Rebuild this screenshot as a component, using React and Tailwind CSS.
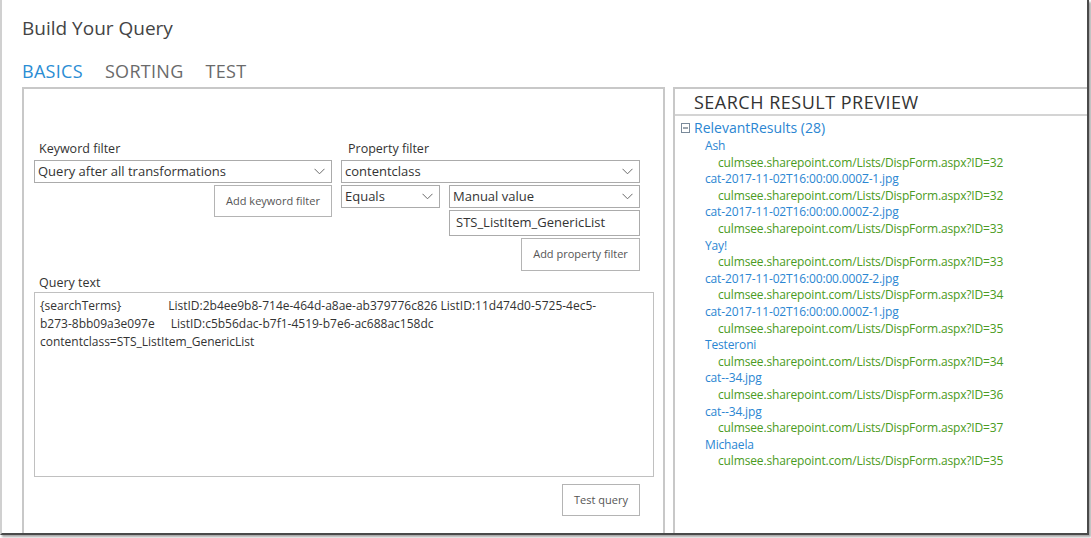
const font = { fontFamily: '"Segoe UI", "Open Sans", "Noto Sans", sans-serif' };

const results = [
  ['Ash', '32'],
  ['cat-2017-11-02T16:00:00.000Z-1.jpg', '32'],
  ['cat-2017-11-02T16:00:00.000Z-2.jpg', '33'],
  ['Yay!', '33'],
  ['cat-2017-11-02T16:00:00.000Z-2.jpg', '34'],
  ['cat-2017-11-02T16:00:00.000Z-1.jpg', '35'],
  ['Testeroni', '34'],
  ['cat--34.jpg', '36'],
  ['cat--34.jpg', '37'],
  ['Michaela', '35'],
];

function Chevron() {
  return (
    <svg width="11" height="7" viewBox="0 0 11 7" className="shrink-0">
      <path d="M0.5 0.8 L5.5 5.8 L10.5 0.8" fill="none" stroke="#6a6a6a" strokeWidth="1" />
    </svg>
  );
}

function Select({ value, className = '' }) {
  return (
    <div className={`h-[23px] border border-[#ababab] bg-white flex items-center justify-between pl-[3px] pr-[6px] text-[13px] text-[#333] ${className}`}>
      <span>{value}</span>
      <Chevron />
    </div>
  );
}

function Button({ children, className = '' }) {
  return (
    <div className={`h-[32px] border border-[#b4b4b4] bg-white flex items-center justify-center text-[11px] text-[#555] ${className}`}>
      {children}
    </div>
  );
}

export default function App() {
  return (
    <div className="w-[1091px] h-[538px] bg-white overflow-hidden" style={font}>
      <div className="w-[1089px] h-[535px] border-l-2 border-l-[#d0d0d0] border-r-2 border-r-[#4a4a4a] border-b-2 border-b-[#4a4a4a] shadow-[2px_2px_2px_rgba(0,0,0,0.35)] flex flex-col pl-[20px]">
        {/* Title */}
        <div className="pt-[15px] text-[19px] leading-[26px] text-[#444]">Build Your Query</div>

        {/* Tabs */}
        <div className="mt-[18px] flex gap-[22px] text-[18px] leading-[24px] tracking-[0.3px]">
          <span className="text-[#2a8dd4]">BASICS</span>
          <span className="text-[#6a6a6a]">SORTING</span>
          <span className="text-[#6a6a6a]">TEST</span>
        </div>

        <div className="mt-[4px] flex flex-1 min-h-0 gap-[8px]">
          {/* Left panel */}
          <div className="w-[643px] border-l-2 border-t-2 border-r-2 border-[#c8c8c8] pl-[10px] pr-[9px] pt-[51px] flex flex-col">
            <div className="flex gap-[9px] pr-[14px]">
              <div className="w-[298px] flex flex-col">
                <div className="pl-[5px] text-[12.5px] leading-[17px] text-[#333]">Keyword filter</div>
                <Select value="Query after all transformations" className="mt-[3px]" />
                <div className="flex justify-end mt-[2px]">
                  <Button className="w-[118px]">Add keyword filter</Button>
                </div>
              </div>
              <div className="w-[299px] flex flex-col">
                <div className="pl-[7px] text-[12.5px] leading-[17px] text-[#333]">Property filter</div>
                <Select value="contentclass" className="mt-[3px]" />
                <div className="flex gap-[9px] mt-[2px]">
                  <Select value="Equals" className="w-[99px]" />
                  <Select value="Manual value" className="flex-1" />
                </div>
                <div className="flex justify-end mt-[2px]">
                  <div className="w-[191px] h-[26px] border border-[#ababab] bg-white flex items-center pl-[6px] text-[13px] text-[#333]">
                    STS_ListItem_GenericList
                  </div>
                </div>
                <div className="flex justify-end mt-[2px]">
                  <Button className="w-[119px] h-[33px]">Add property filter</Button>
                </div>
              </div>
            </div>

            <div className="mt-[3px] pl-[5px] text-[12.5px] leading-[17px] text-[#333]">Query text</div>
            <div className="mt-[1px] h-[185px] border border-[#c0c0c0] px-[5px] pt-[4px] text-[12px] leading-[18px] text-[#333] whitespace-pre">
              <div>{'{searchTerms}'}<span className="ml-[47px]">ListID:2b4ee9b8-714e-464d-a8ae-ab379776c826 ListID:11d474d0-5725-4ec5-</span></div>
              <div>{'b273-8bb09a3e097e'}<span className="ml-[16px]">ListID:c5b56dac-b7f1-4519-b7e6-ac688ac158dc</span></div>
              <div>contentclass=STS_ListItem_GenericList</div>
            </div>
            <div className="flex justify-end mt-[7px] pr-[14px]">
              <Button className="w-[78px]">Test query</Button>
            </div>
          </div>

          {/* Right panel */}
          <div className="flex-1 border-l-2 border-t-2 border-[#c8c8c8] flex flex-col">
            <div className="h-[27px] border-b-2 border-[#d4d4d4] pl-[19px] text-[18px] leading-[26px] text-[#333] tracking-[0.5px]">
              SEARCH RESULT PREVIEW
            </div>
            <div className="pl-[6px] pt-[3px] text-[12px] tracking-[-0.15px] leading-[16.6px]">
              <div className="flex items-center gap-[4px] text-[14px] tracking-normal leading-[18px] text-[#2b86d2]">
                <svg width="9" height="10" viewBox="0 0 9 10" className="shrink-0">
                  <rect x="0.5" y="0.5" width="8" height="9" fill="none" stroke="#7a8a9a" strokeWidth="1" />
                  <path d="M2 5 H7" stroke="#5a6a7a" strokeWidth="1.2" />
                </svg>
                <span>RelevantResults (28)</span>
              </div>
              <div className="pl-[24px] pt-[1px]">
                {results.map(([title, id], i) => (
                  <div key={i}>
                    <div className="text-[#2b86d2]">{title}</div>
                    <div className="pl-[13px] text-[#4a9b22]">culmsee.sharepoint.com/Lists/DispForm.aspx?ID={id}</div>
                  </div>
                ))}
              </div>
            </div>
          </div>
        </div>
      </div>
    </div>
  );
}
